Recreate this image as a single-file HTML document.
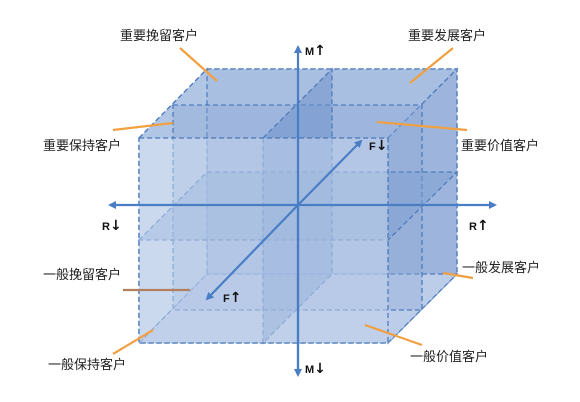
<!DOCTYPE html>
<html><head><meta charset="utf-8"><style>
html,body{margin:0;padding:0;background:#fff;}
svg{display:block;}
.t{font-family:"Liberation Sans","Noto Sans CJK SC",sans-serif;font-size:13px;fill:#222;}
.b{font-family:"Liberation Sans",sans-serif;font-size:11px;font-weight:bold;fill:#111;}
.a{font-family:"DejaVu Sans",sans-serif;font-size:14px;font-weight:bold;fill:#111;}
</style></head><body>
<svg width="580" height="402" viewBox="0 0 580 402" xmlns="http://www.w3.org/2000/svg">
<defs>
<marker id="ah" markerWidth="8" markerHeight="8" refX="6" refY="4" orient="auto" markerUnits="userSpaceOnUse">
<path d="M0,0 L8,4 L0,8 Z" fill="#4a7ec4"/></marker>
</defs>
<g stroke="#4f7cbd" stroke-width="1.3" stroke-dasharray="5,3">
<rect x="207" y="69" width="250" height="205" fill="#aac0e2"/>
<polygon points="139,138 207,69 457,69 388,138" fill="#a9bfe1"/>
<polygon points="388,138 457,69 457,274 388,343" fill="#9db5dc"/>
<polygon points="139,138 207,69 207,274 139,343" fill="#b7c9e6" fill-opacity="0.6"/>
<polygon points="139,343 207,274 457,274 388,343" fill="#bccde9"/>
<rect x="173" y="105" width="249" height="205" fill="#8eaad6" fill-opacity="0.4"/>
<polygon points="139,240 207,172 457,172 388,240" fill="#7d9dd0" fill-opacity="0.5"/>
<polygon points="263,138 332,69 332,274 263,343" fill="#6f92cb" fill-opacity="0.55"/>
<rect x="139" y="138" width="249" height="205" fill="#c3d3ec" fill-opacity="0.55"/>
</g>
<g stroke="#4a7ec4" stroke-width="2.2" fill="none">
<line x1="298" y1="375" x2="298" y2="47" marker-end="url(#ah)"/>
<line x1="298" y1="205" x2="298" y2="375" marker-end="url(#ah)"/>
<line x1="300" y1="205" x2="495" y2="205" marker-end="url(#ah)"/>
<line x1="300" y1="205" x2="110" y2="205" marker-end="url(#ah)"/>
<line x1="298" y1="205" x2="361" y2="141" marker-end="url(#ah)"/>
<line x1="298" y1="205" x2="207" y2="299" marker-end="url(#ah)"/>
</g>
<g stroke="#f0a040" stroke-width="2.2">
<line x1="180" y1="48" x2="217" y2="81"/>
<line x1="453" y1="48" x2="410" y2="83"/>
<line x1="113" y1="130" x2="173" y2="123"/>
<line x1="377" y1="122" x2="467" y2="130"/>
<line x1="123" y1="290" x2="190" y2="290" stroke="#b08060"/>
<line x1="443" y1="273" x2="473" y2="278"/>
<line x1="153" y1="330" x2="113" y2="354"/>
<line x1="365" y1="325" x2="422" y2="345"/>
</g>
<text class="t" x="120" y="40">重要挽留客户</text>
<text class="t" x="408" y="40">重要发展客户</text>
<text class="t" x="43" y="150">重要保持客户</text>
<text class="t" x="461" y="150">重要价值客户</text>
<text class="t" x="43" y="279">一般挽留客户</text>
<text class="t" x="462" y="272">一般发展客户</text>
<text class="t" x="48" y="369">一般保持客户</text>
<text class="t" x="410" y="361">一般价值客户</text>
<text class="b" x="305" y="55">M<tspan class="a">↑</tspan></text>
<text class="b" x="305" y="373">M<tspan class="a">↓</tspan></text>
<text class="b" x="102" y="230">R<tspan class="a">↓</tspan></text>
<text class="b" x="469" y="230">R<tspan class="a">↑</tspan></text>
<text class="b" x="369" y="150">F<tspan class="a">↓</tspan></text>
<text class="b" x="223" y="302">F<tspan class="a">↑</tspan></text>
</svg>
</body></html>
